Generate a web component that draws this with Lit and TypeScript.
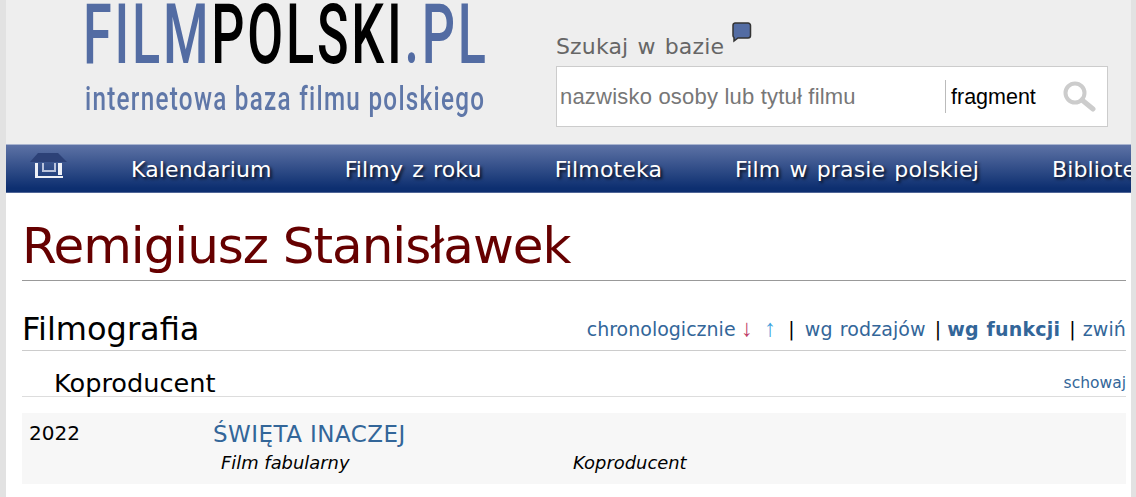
import { LitElement, html, css } from "lit";
import { customElement } from "lit/decorators.js";

@customElement("app-root")
export class AppRoot extends LitElement {
  static styles = css`
    :host { display: block; width: 1136px; height: 497px; overflow: hidden; background: #e2e2e2; font-family: "DejaVu Sans", Verdana, sans-serif; }
    .page { margin: 0 5px 0 6px; height: 497px; background: #fff; }
    .header { height: 144px; background: #eee; display: flex; }
    .logo { width: 550px; flex: none; padding-left: 77px; box-sizing: border-box; font-family: "Roboto", sans-serif; white-space: nowrap; }
    .logo-main { display: block; font-size: 84px; line-height: 70px; height: 70px; font-weight: 500; color: #536ca3; transform: scaleX(.62); transform-origin: 0 0; letter-spacing: 4.5px; }
    .logo-main b { font-weight: 500; color: #000; }
    .logo-sub { display: block; margin: 10px 0 0 2px; font-size: 34px; line-height: 36px; font-weight: 500; color: #5f77a8; transform: scaleX(.713); transform-origin: 0 0; letter-spacing: 1.8px; }
    .search { padding-top: 22px; width: 552px; }
    .search-title { height: 44px; font-size: 22px; line-height: 50px; color: #666; display: flex; letter-spacing: .15px; word-spacing: 2px; }
    .bubble { margin: 0 0 0 7px; }
    .box { height: 59px; width: 550px; border: 1px solid #ccc; background: #fff; display: flex; align-items: center; font-family: "Liberation Sans", Arial, sans-serif; }
    .ph { width: 385px; padding: 1px 0 0 3px; color: #777; font-size: 22px; letter-spacing: .2px; }
    .frag { border-left: 1px solid #bbb; height: 33px; line-height: 35px; padding-left: 5px; width: 110px; color: #000; font-size: 21.500px; flex: none; }
    .lens { margin-left: 1px; filter: blur(.6px); }
    .nav { height: 49px; box-sizing: border-box; padding-top: 1px; border-top: 1px solid #a9b4cf; border-bottom: 1px solid #4f6596; background: linear-gradient(#5d72a5, #0d2f70 92%); display: flex; align-items: center; overflow: hidden; white-space: nowrap; color: #fff; font-size: 22px; letter-spacing: .14px; word-spacing: 2px; text-shadow: 2px 2px 3px rgba(0,0,0,.75); }
    .home { margin: 5px 0 0 24px; flex: none; align-self: flex-start; }
    .nav span { margin-left: 73px; flex: none; }
    .nav span.first { margin-left: 63px; }
    .content { padding: 0 5px 0 16px; }
    h1 { margin: 0; font-weight: 400; font-size: 50px; line-height: 60px; padding-top: 23px; height: 64px; color: #660000; border-bottom: 1px solid #999; letter-spacing: -1.050px; }
    .filmo { display: flex; justify-content: space-between; align-items: flex-end; height: 70px; border-bottom: 1px solid #ccc; box-sizing: border-box; }
    h2 { margin: 0; font-weight: 400; font-size: 32px; line-height: 40px; color: #000; padding-bottom: 1px; }
    .links { font-size: 19px; line-height: 26px; padding-bottom: 8px; color: #000; white-space: nowrap; letter-spacing: .1px; word-spacing: 1px; display: flex; align-items: baseline; }
    a { color: #336699; text-decoration: none; }
    .links b { letter-spacing: .2px; }
    .chrono { letter-spacing: 0; }
    .down, .up { font-family: "Liberation Sans", sans-serif; font-size: 24px; line-height: 26px; }
    .down { color: #c0406a; margin-left: 5.500px; }
    .up { color: #3f9fdc; margin-left: 11px; margin-right: 12px; }
    .by-kind { margin: 0 9px 0 10px; }
    .by-role { margin: 0 9px 0 6px; }
    .fold { margin-left: 7px; }
    .role { display: flex; justify-content: space-between; align-items: flex-end; height: 46px; border-bottom: 1px solid #ddd; box-sizing: border-box; padding-left: 32px; }
    h3 { margin: 0; font-weight: 400; font-size: 25.600px; line-height: 26px; color: #000; white-space: nowrap; }
    .hide { font-size: 15.500px; line-height: 20px; padding-bottom: 3px; }
    .row { margin-top: 16px; height: 71px; background: #f7f7f7; display: grid; grid-template-columns: 184px 1fr; box-sizing: border-box; padding: 8px 0 0 7px; }
    .year { font-size: 20px; line-height: 24px; color: #000; }
    .title { font-size: 23px; line-height: 26px; letter-spacing: .45px; }
    .meta { display: grid; grid-template-columns: 352px 1fr; padding: 4px 0 0 8px; font-style: italic; font-size: 17.900px; line-height: 24px; color: #000; }
  `;

  render() {
    return html`<div class="page">
      <div class="header">
        <div class="logo">
          <span class="logo-main">FILM<b>POLSKI</b>.PL</span>
          <span class="logo-sub">internetowa baza filmu polskiego</span>
        </div>
        <div class="search">
          <div class="search-title">Szukaj w bazie
            <svg class="bubble" width="22" height="22" viewBox="0 0 22 22"><path d="M4 1h13a2.500 2.500 0 0 1 2.500 2.500v10a2.500 2.500 0 0 1-2.500 2.500H7l-4 3v-3.500a2.500 2.500 0 0 1-1-2V3.500A2.500 2.500 0 0 1 4 1z" fill="#536ca3" stroke="#333" stroke-width="1.500"/></svg>
          </div>
          <div class="box">
            <div class="ph">nazwisko osoby lub tytuł filmu</div>
            <div class="frag">fragment</div>
            <svg class="lens" width="36" height="34" viewBox="0 0 36 34"><circle cx="13" cy="13" r="9.500" fill="none" stroke="#ccc" stroke-width="4"/><path d="M20 20l11 9" stroke="#ccc" stroke-width="5" stroke-linecap="round"/></svg>
          </div>
        </div>
      </div>
      <div class="nav">
        <svg class="home" width="38" height="30" viewBox="0 0 38 30"><path d="M0 11 8 2h20l9 9z" fill="#2c4177"/><path d="M5 12h3v13H5zM28 12h4v12h-4zM5 25h28v2H5z" fill="#eef1f7"/><path d="M12 12h2v7h10v-7h2v9H12z" fill="#b9c3dc"/></svg>
        <span class="first">Kalendarium</span><span>Filmy z roku</span><span>Filmoteka</span><span>Film w prasie polskiej</span><span>Biblioteka</span>
      </div>
      <div class="content">
        <h1>Remigiusz Stanisławek</h1>
        <div class="filmo">
          <h2>Filmografia</h2>
          <div class="links"><a class="chrono">chronologicznie</a><span class="down">↓</span><span class="up">↑</span><span>|</span><a class="by-kind">wg rodzajów</a><span>|</span><a class="by-role"><b>wg funkcji</b></a><span>|</span><a class="fold">zwiń</a></div>
        </div>
        <div class="role"><h3>Koproducent</h3><a class="hide">schowaj</a></div>
        <div class="row">
          <div class="year">2022</div>
          <div>
            <a class="title">ŚWIĘTA INACZEJ</a>
            <div class="meta"><span>Film fabularny</span><span>Koproducent</span></div>
          </div>
        </div>
      </div>
    </div>`;
  }
}
